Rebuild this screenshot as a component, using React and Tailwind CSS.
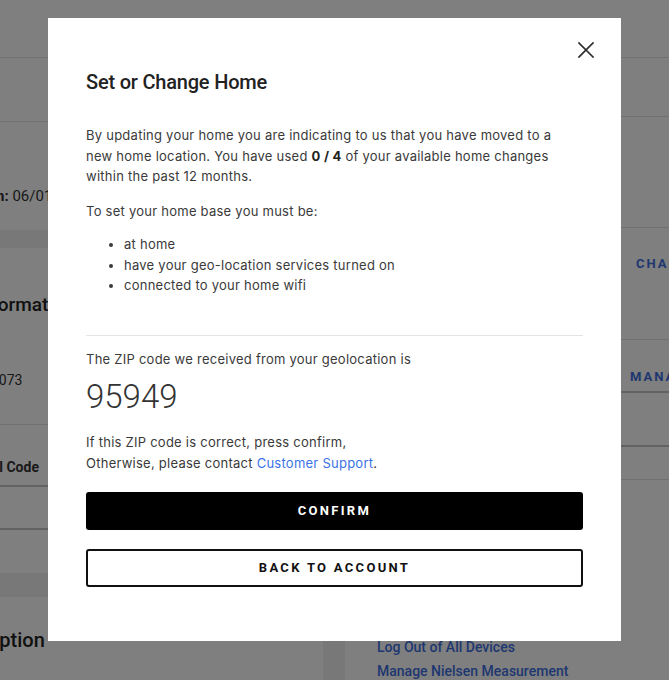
import React from "react";

function CloseIcon() {
  return (
    <svg width="16" height="16" viewBox="0 0 16 16" fill="none">
      <path d="M1 1L15 15M15 1L1 15" stroke="#2b2b2b" strokeWidth="1.7" strokeLinecap="square" />
    </svg>
  );
}

function Background() {
  return (
    <div className="h-[680px] w-[669px] overflow-hidden bg-[#f0f0f0] text-[#333]">
      <div className="h-[58px] bg-white border-b border-[#e2e2e2]"></div>
      <div className="flex gap-[22px]">
        {/* left column */}
        <div className="w-[323px] shrink-0 flex flex-col">
          <div className="bg-white">
            <div className="h-[64px] border-b border-[#e2e2e2]"></div>
            <div className="h-[108px] pt-[65px]">
              <div className="whitespace-nowrap text-[15px] leading-[19px] -ml-[81px]">
                <span className="font-bold">Subscription:</span> 06/01/2024
              </div>
            </div>
          </div>
          <div className="mt-[18px] bg-white">
            <div className="pt-[45px] h-[110px]">
              <div className="whitespace-nowrap text-[19px] leading-[24px] font-medium text-[#222] -ml-[25px]">
                Information
              </div>
              <div className="whitespace-nowrap text-[14px] leading-[18px] mt-[54px] -ml-[64px]">530-555-0073</div>
            </div>
            <div className="h-[67px] border-b border-[#e2e2e2]"></div>
            <div className="h-[62px] pt-[33px] border-b-2 border-[#c4c4c4]">
              <div className="whitespace-nowrap text-[14px] leading-[18px] font-bold -ml-[37px]">Postal Code</div>
            </div>
            <div className="h-[43px] border-b-2 border-[#c4c4c4]"></div>
            <div className="h-[43px]"></div>
          </div>
          <div className="mt-[24px] bg-white h-[120px] pt-[31px]">
            <div className="whitespace-nowrap text-[20px] leading-[24px] font-medium text-[#222] -ml-[68px]">
              Subscription
            </div>
          </div>
        </div>
        {/* right column */}
        <div className="w-[420px] shrink-0 bg-white flex flex-col">
          <div className="h-[59px] border-b border-[#e2e2e2]"></div>
          <div className="h-[111px] border-b border-[#e2e2e2]"></div>
          <div className="h-[112px] border-b border-[#e2e2e2] pt-[23px] pl-[291px]">
            <span className="text-[13px] leading-[16px] font-bold tracking-[2px] text-[#3f6fe0]">CHANGE</span>
          </div>
          <div className="h-[53px] border-b-2 border-[#c4c4c4] pt-[24px] pl-[285px]">
            <span className="text-[13px] leading-[16px] font-bold tracking-[2px] text-[#3f6fe0]">MANAGE</span>
          </div>
          <div className="h-[54px] border-b-2 border-[#c4c4c4]"></div>
          <div className="h-[33px] border-b border-[#e2e2e2]"></div>
          <div className="pl-[32px] pt-[158px] flex flex-col gap-[5px] text-[14px] leading-[19px] font-medium text-[#3f6fe0]">
            <span>Log Out of All Devices</span>
            <span>Manage Nielsen Measurement</span>
          </div>
        </div>
      </div>
    </div>
  );
}

export default function App() {
  return (
    <div className="relative h-[680px] w-[669px] overflow-hidden font-[Roboto,sans-serif]">
      <Background />
      <div className="absolute inset-0 bg-black/50 flex justify-center items-start pt-[18px]">
        <div className="relative w-[573px] bg-white px-[38px] pt-[52px] pb-[54px]">
          <button className="absolute top-[24px] right-[27px]" aria-label="Close">
            <CloseIcon />
          </button>
          <h2 className="text-[20px] leading-[24px] font-medium text-[#222] tracking-[-0.2px]">Set or Change Home</h2>
          <div className="font-[Inter,sans-serif] text-[13px] leading-[20.5px] tracking-[0.25px] text-[#3a3a3a]">
            <p className="mt-[31px]">
              By updating your home you are indicating to us that you have moved to a<br />
              new home location. You have used <b className="font-bold text-[#222]">0 / 4</b> of your available home changes<br />
              within the past 12 months.
            </p>
            <p className="mt-[14px]">To set your home base you must be:</p>
            <ul className="mt-[13px] list-disc pl-[38px]">
              <li>at home</li>
              <li>have your geo-location services turned on</li>
              <li>connected to your home wifi</li>
            </ul>
            <div className="mt-[39px] h-px bg-[#e3e3e8]"></div>
            <p className="mt-[13px]">The ZIP code we received from your geolocation is</p>
          </div>
          <div className="mt-[10px] text-[33px] leading-[36px] font-light text-[#333]">95949</div>
          <p className="mt-[17px] font-[Inter,sans-serif] text-[13px] leading-[20.5px] tracking-[0.25px] text-[#3a3a3a]">
            If this ZIP code is correct, press confirm,<br />
            Otherwise, please contact <span className="text-[#3b73e6]">Customer Support</span>.
          </p>
          <button className="mt-[19px] w-full h-[38px] bg-black text-white rounded-[3px] text-[13px] font-bold tracking-[2.3px]">
            CONFIRM
          </button>
          <button className="mt-[19px] w-full h-[38px] bg-white text-[#111] border-2 border-[#111] rounded-[3px] text-[13px] font-bold tracking-[2.3px]">
            BACK TO ACCOUNT
          </button>
        </div>
      </div>
    </div>
  );
}
